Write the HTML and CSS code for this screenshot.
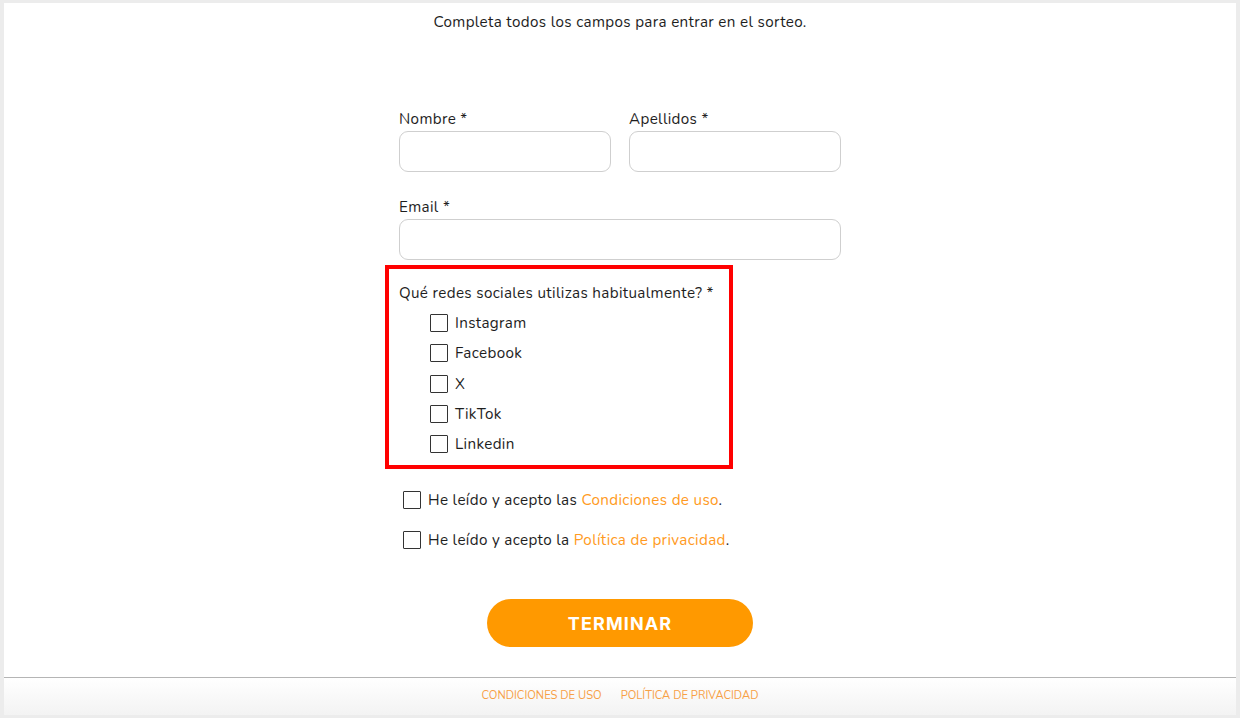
FILE: index.html
```html
<!DOCTYPE html>
<html lang="es">
<head>
<meta charset="utf-8">
<title>Sorteo</title>
<link rel="stylesheet" href="styles.css">
</head>
<body>
<div class="page">
  <main class="main">
    <p class="intro">Completa todos los campos para entrar en el sorteo.</p>
    <form class="form">
      <div class="row2">
        <div class="field">
          <label class="label">Nombre *</label>
          <input class="input" type="text">
        </div>
        <div class="field">
          <label class="label">Apellidos *</label>
          <input class="input" type="text">
        </div>
      </div>
      <div class="field email">
        <label class="label">Email *</label>
        <input class="input" type="email">
      </div>
      <div class="social">
        <div class="label">Qué redes sociales utilizas habitualmente? *</div>
        <label class="opt"><input class="box" type="checkbox"><span>Instagram</span></label>
        <label class="opt"><input class="box" type="checkbox"><span>Facebook</span></label>
        <label class="opt"><input class="box" type="checkbox"><span>X</span></label>
        <label class="opt"><input class="box" type="checkbox"><span>TikTok</span></label>
        <label class="opt"><input class="box" type="checkbox"><span>Linkedin</span></label>
      </div>
      <div class="terms">
        <label class="term"><input class="box big" type="checkbox"><span>He leído y acepto las <a class="link" href="#">Condiciones de uso</a>.</span></label>
        <label class="term"><input class="box big" type="checkbox"><span>He leído y acepto la <a class="link" href="#">Política de privacidad</a>.</span></label>
      </div>
      <div class="actions">
        <button class="btn" type="button">TERMINAR</button>
      </div>
    </form>
  </main>
  <footer class="footer">
    <a class="flink" href="#">CONDICIONES DE USO</a>
    <a class="flink" href="#">POLÍTICA DE PRIVACIDAD</a>
  </footer>
</div>
</body>
</html>
```
FILE: styles.css
```css
* { box-sizing: border-box; }
html, body { margin: 0; padding: 0; }
body {
  background: #ececec;
  font-family: "Nunito", "Open Sans", "Noto Sans", sans-serif;
  color: #1e1e1e;
  font-size: 15.2px;
  letter-spacing: 0.35px;
  height: 718px;
  overflow: hidden;
}
.page {
  margin: 3px 4px 0 4px;
  height: 712px;
  background: #fff;
  display: flex;
  flex-direction: column;
}
.main { flex: 1; }
.intro {
  margin: 0;
  padding-top: 9px;
  line-height: 20px;
  text-align: center;
}
.form {
  width: 442px;
  margin: 77px auto 0;
}
.row2 {
  display: grid;
  grid-template-columns: minmax(0, 1fr) minmax(0, 1fr);
  gap: 18px;
}
.field { display: flex; flex-direction: column; min-width: 0; }
.email { margin-top: 25px; }
.label {
  line-height: 20px;
  margin-bottom: 2px;
}
.input {
  width: 100%;
  min-width: 0;
  height: 41px;
  border: 1px solid #cfcfcf;
  border-radius: 9px;
  background: #fff;
  font: inherit;
  padding: 0 12px;
  outline: none;
}
.social {
  margin: 5px 0 0 -14px;
  width: 348px;
  border: 4px solid #ff0000;
  padding: 14px 10px 6px 10px;
}
.social .label { margin-bottom: 5px; }
.opt {
  display: flex;
  align-items: center;
  height: 30.25px;
  padding-left: 31px;
  gap: 7px;
}
.box {
  appearance: none;
  -webkit-appearance: none;
  margin: 0;
  width: 18px;
  height: 18px;
  border: 1.5px solid #333;
  border-radius: 1px;
  background: #fff;
  flex: none;
}
.terms {
  margin-top: 21px;
  display: flex;
  flex-direction: column;
  gap: 20px;
}
.term {
  display: flex;
  align-items: center;
  height: 20px;
  padding-left: 4px;
  gap: 7px;
}
.link { color: #ff9a22; text-decoration: none; }
.actions {
  margin-top: 49px;
  display: flex;
  justify-content: center;
}
.btn {
  width: 266px;
  height: 48px;
  border: none;
  border-radius: 24px;
  background: #ff9900;
  color: #fff;
  font-family: "Inter", "Open Sans", sans-serif;
  font-weight: 700;
  font-size: 18px;
  letter-spacing: 1.1px;
  padding: 0;
}
.footer {
  height: 38px;
  border-top: 1px solid #b5b5b5;
  background: linear-gradient(#ffffff, #f3f3f3);
  display: flex;
  justify-content: center;
  align-items: center;
  gap: 19px;
  padding-bottom: 2px;
}
.flink {
  color: #f7a045;
  font-size: 11.2px;
  letter-spacing: 0;
  text-decoration: none;
  font-family: "Nunito", "Open Sans", sans-serif;
}
```
